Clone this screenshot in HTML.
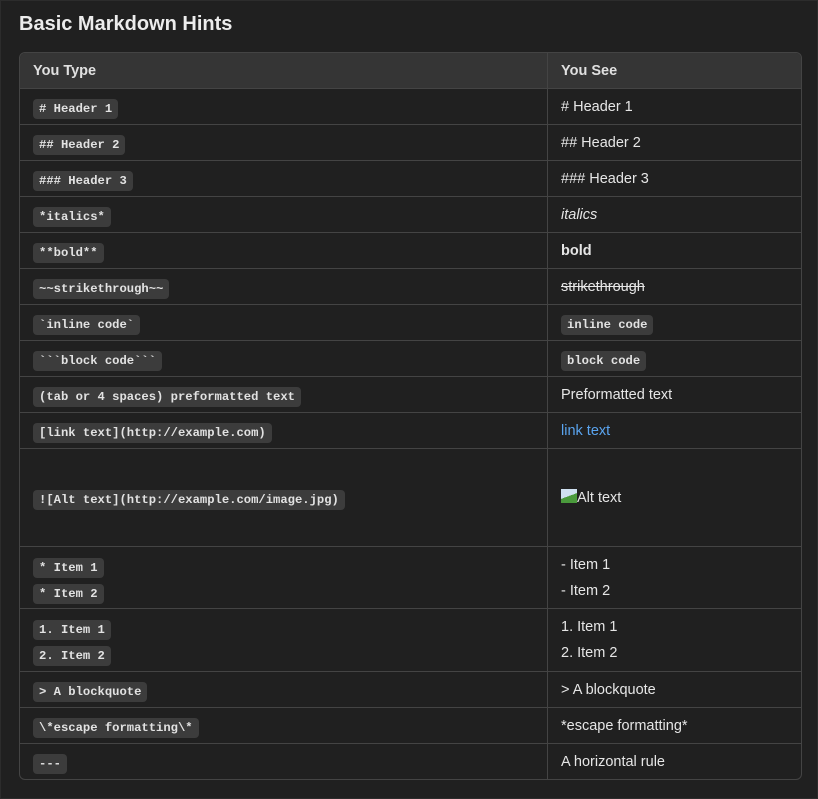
<!DOCTYPE html>
<html><head><style>
html,body{margin:0;padding:0;background:#1f1f1f;width:818px;height:799px;overflow:hidden;font-family:"Liberation Sans",sans-serif;color:#e6e6e6}
.wrap{position:absolute;left:0;top:0;width:816px;height:797px;border:1px solid #2c2c2c;background:#202020}
h1{position:absolute;left:18px;top:12px;margin:0;font-size:20px;font-weight:bold;color:#ececec}
table{position:absolute;left:18px;top:51px;width:783px;border-collapse:separate;border-spacing:0;border:1px solid #444;border-radius:6px;overflow:hidden}
td,th{border-bottom:1px solid #444;padding:0 0 0 13px;text-align:left;vertical-align:middle;font-size:14.5px}
tr:last-child td{border-bottom:none}
td:first-child,th:first-child{border-right:1px solid #444;width:514px}
th{background:#353535;height:35px;font-size:14.5px;font-weight:bold;color:#e0e0e0}
td{height:35px}
code{font-family:"Liberation Mono",monospace;font-size:12.2px;font-weight:bold;background:#3c3c3c;color:#e2e2e2;border-radius:4px;padding:3px 6px;display:inline-block;line-height:14px;position:relative;top:2px}
.l{line-height:26px}
a{color:#5aa4ef;text-decoration:none}
</style></head><body><div class="wrap">
<h1>Basic Markdown Hints</h1>
<table>
<tr><th>You Type</th><th>You See</th></tr>
<tr><td><code># Header 1</code></td><td># Header 1</td></tr>
<tr><td><code>## Header 2</code></td><td>## Header 2</td></tr>
<tr><td><code>### Header 3</code></td><td>### Header 3</td></tr>
<tr><td><code>*italics*</code></td><td><i>italics</i></td></tr>
<tr><td><code>**bold**</code></td><td><b>bold</b></td></tr>
<tr><td><code>~~strikethrough~~</code></td><td><s>strikethrough</s></td></tr>
<tr><td><code>&#96;inline code&#96;</code></td><td><code>inline code</code></td></tr>
<tr><td><code>&#96;&#96;&#96;block code&#96;&#96;&#96;</code></td><td><code>block code</code></td></tr>
<tr><td><code>(tab or 4 spaces) preformatted text</code></td><td>Preformatted text</td></tr>
<tr><td><code>[link text](http://example.com)</code></td><td><a>link text</a></td></tr>
<tr><td style="height:97px"><code>![Alt text](http://example.com/image.jpg)</code></td><td><span style="display:inline-block;width:16px;height:14px;background:linear-gradient(160deg,#cfe0f0 50%,#4a9a3c 50%);vertical-align:-1px"></span>Alt text</td></tr>
<tr><td style="height:61px" class="l"><code>* Item 1</code><br><code>* Item 2</code></td><td class="l">- Item 1<br>- Item 2</td></tr>
<tr><td style="height:62px" class="l"><code>1. Item 1</code><br><code>2. Item 2</code></td><td class="l">1. Item 1<br>2. Item 2</td></tr>
<tr><td><code>&gt; A blockquote</code></td><td>&gt; A blockquote</td></tr>
<tr><td><code>\*escape formatting\*</code></td><td>*escape formatting*</td></tr>
<tr><td><code>---</code></td><td>A horizontal rule</td></tr>
</table>
</div></body></html>
